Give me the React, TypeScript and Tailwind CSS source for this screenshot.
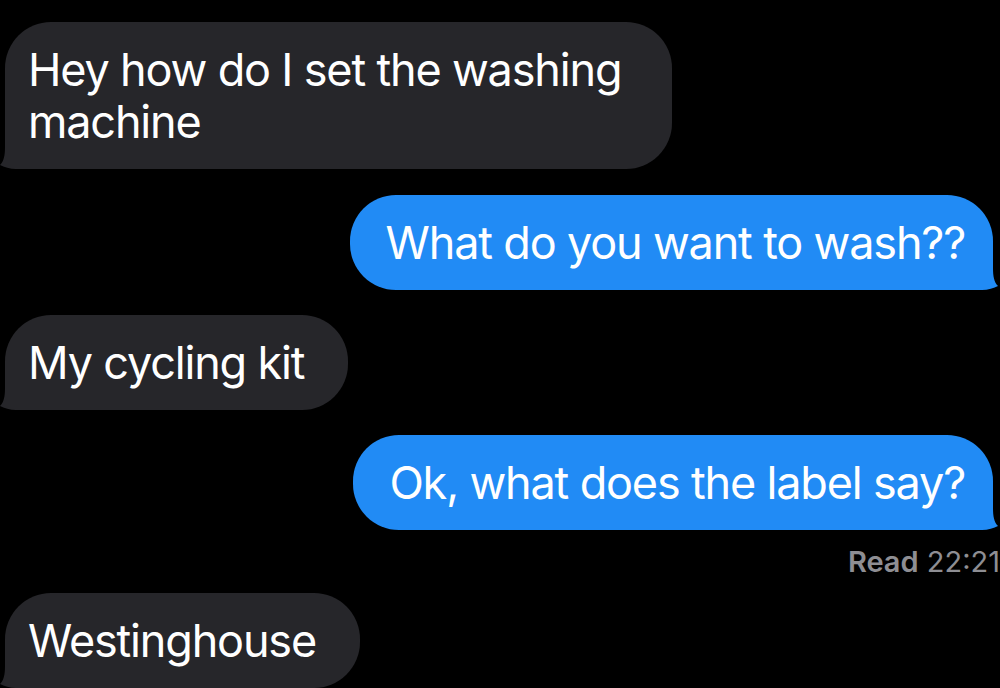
import { ReactNode } from "react";

const font = { fontFamily: "Inter, 'Liberation Sans', sans-serif" };

function TailLeft() {
  return (
    <svg
      className="absolute -left-[5px] bottom-0"
      width="30"
      height="40"
      viewBox="0 0 30 40"
    >
      <path
        d="M5 0 L30 0 L30 40 L16 40 C10 40 4 38 0 36 C4 32 5 26 5 18 Z"
        fill="#26262a"
      />
    </svg>
  );
}

function TailRight() {
  return (
    <svg
      className="absolute -right-[5px] bottom-0 -scale-x-100"
      width="30"
      height="40"
      viewBox="0 0 30 40"
    >
      <path
        d="M5 0 L30 0 L30 40 L16 40 C10 40 4 38 0 36 C4 32 5 26 5 18 Z"
        fill="#218bf5"
      />
    </svg>
  );
}

function Incoming({ children, className = "" }: { children: ReactNode; className?: string }) {
  return (
    <div
      className={`relative self-start ml-[5px] bg-[#26262a] text-white rounded-[46px] rounded-bl-[18px] pl-[23px] pr-[44px] py-[21.5px] text-[45px] leading-[52px] tracking-[-0.026em] whitespace-nowrap ${className}`}
    >
      <span className="relative z-10">{children}</span>
      <TailLeft />
    </div>
  );
}

function Outgoing({ children }: { children: ReactNode }) {
  return (
    <div className="relative self-end mr-[7px] bg-[#218bf5] text-white rounded-[46px] rounded-br-[18px] pl-[36px] pr-[28px] py-[21.5px] text-[45px] leading-[52px] tracking-[-0.026em] whitespace-nowrap">
      <span className="relative z-10">{children}</span>
      <TailRight />
    </div>
  );
}

export default function App() {
  return (
    <div
      className="w-[1000px] h-[688px] overflow-hidden bg-black flex flex-col pt-[22px]"
      style={font}
    >
      <Incoming className="w-[667px]">
        Hey how do I set the washing
        <br />
        machine
      </Incoming>
      <div className="h-[26px]" />
      <Outgoing>What do you want to wash??</Outgoing>
      <div className="h-[25px]" />
      <Incoming>My cycling kit</Incoming>
      <div className="h-[25px]" />
      <Outgoing>Ok, what does the label say?</Outgoing>
      <div className="self-end mt-[16px] mb-[16px] h-[31px] leading-[31px] text-[29px] text-[#8e8e93] whitespace-nowrap">
        <span className="font-semibold">Read</span> 22:21
      </div>
      <Incoming>Westinghouse</Incoming>
    </div>
  );
}
